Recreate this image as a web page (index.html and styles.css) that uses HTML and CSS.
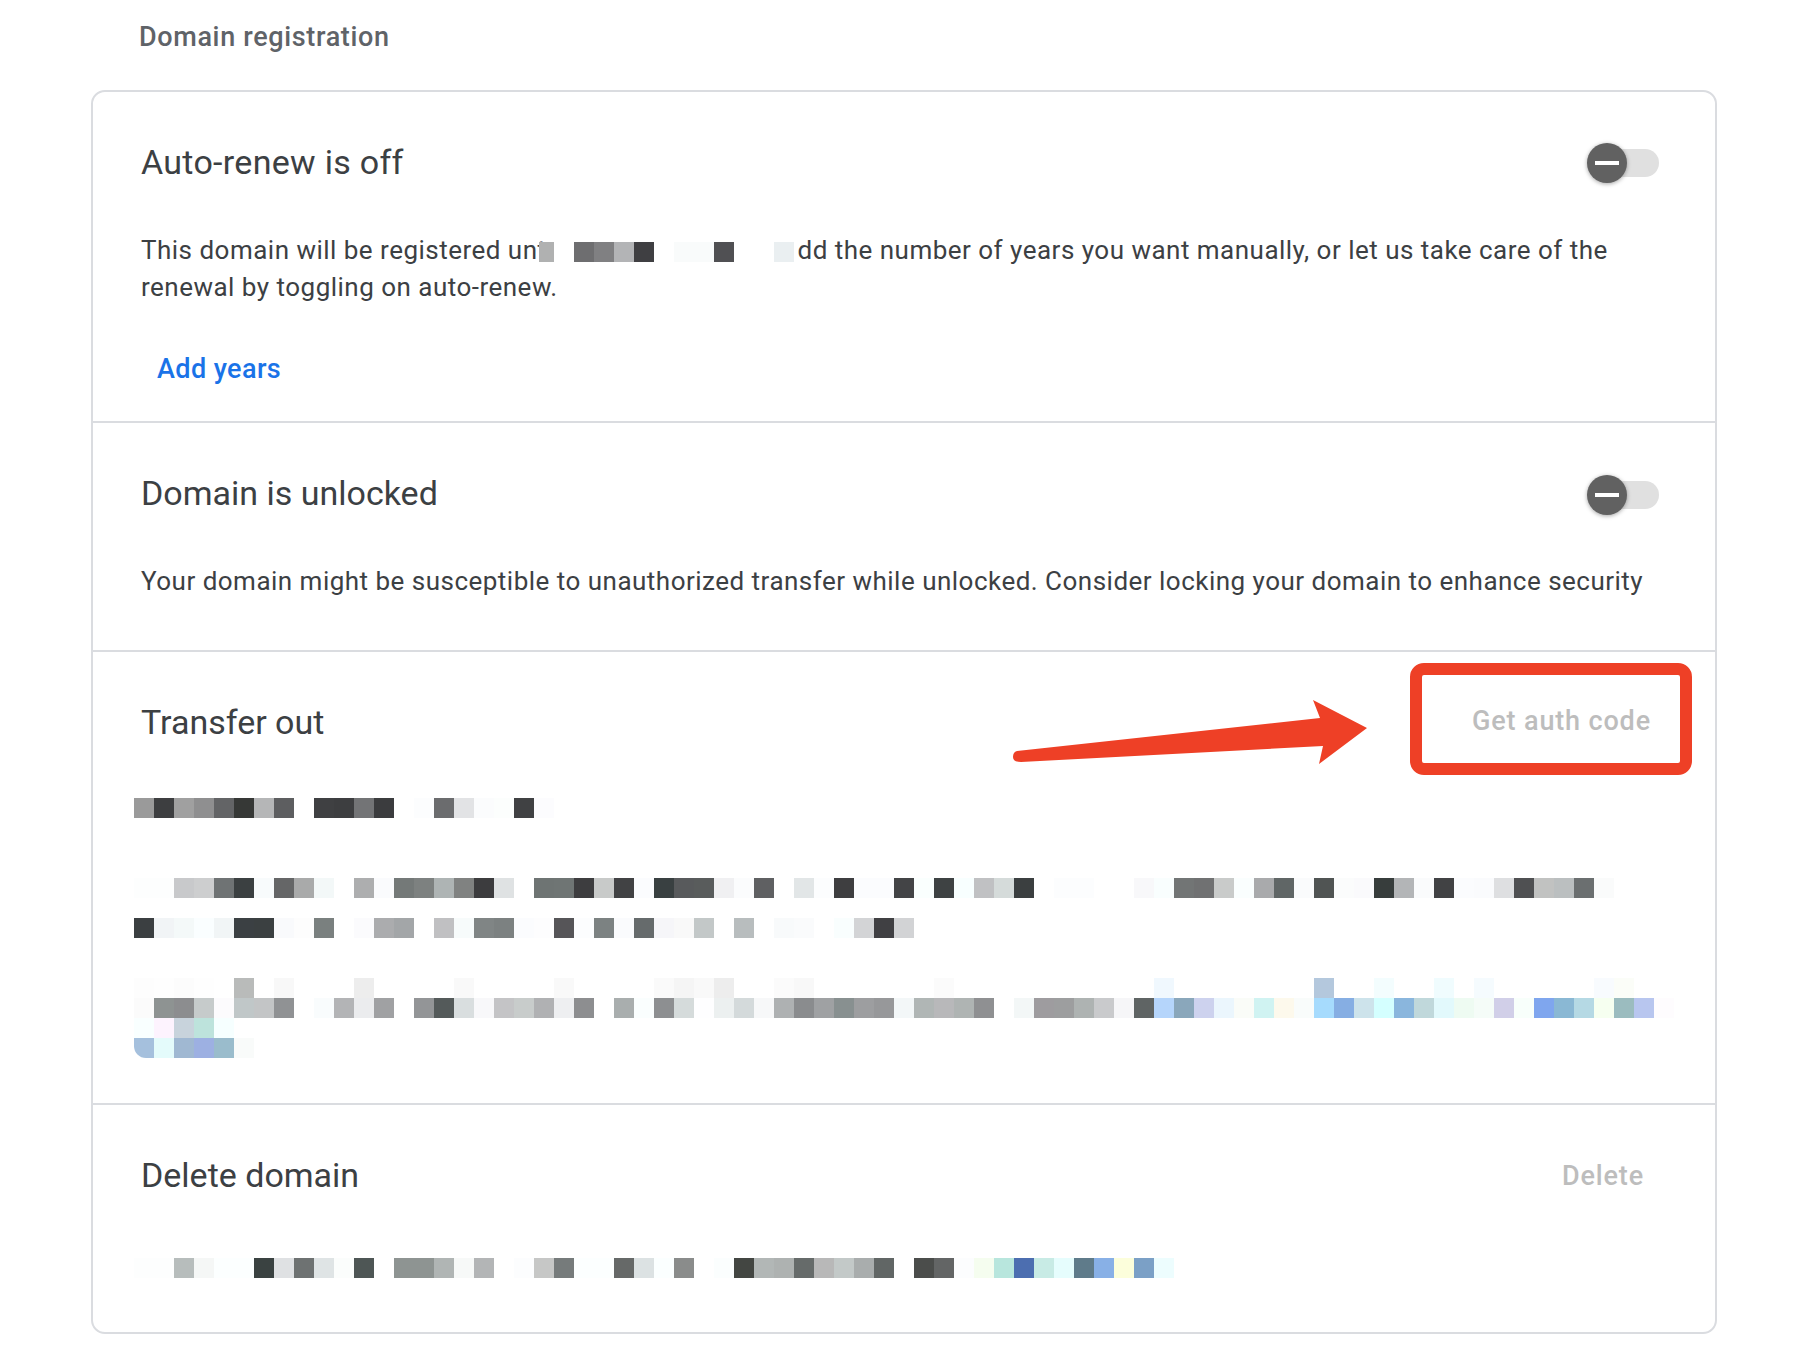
FILE: index.html
```html
<!DOCTYPE html>
<html lang="en">
<head>
<meta charset="utf-8">
<title>Domain registration</title>
<link rel="stylesheet" href="styles.css">
</head>
<body>
<main class="page">
  <h1 class="page-title">Domain registration</h1>
  <div class="card">
    <section class="panel panel-renew">
      <div class="panel-head">
        <h2>Auto-renew is off</h2>
        <span class="toggle"><span class="knob"><span class="minus"></span></span></span>
      </div>
      <p class="body-text">This domain will be registered unt<span class="mosaic-row inline-redaction" data-cells="b0b1b1 fff 6e6e70 808082 b3b4b6 3f3f42 fff f9fbfb f9fbfb 505053 fff fff eaeff1"></span>dd the number of years you want manually, or let us take care of the renewal by toggling on auto-renew.</p>
      <a class="link" href="#">Add years</a>
    </section>
    <section class="panel panel-lock">
      <div class="panel-head">
        <h2>Domain is unlocked</h2>
        <span class="toggle"><span class="knob"><span class="minus"></span></span></span>
      </div>
      <p class="body-text">Your domain might be susceptible to unauthorized transfer while unlocked. Consider locking your domain to enhance security</p>
    </section>
    <section class="panel panel-transfer">
      <div class="panel-head">
        <h2>Transfer out</h2>
        <button class="flat-btn btn-auth" type="button">Get auth code</button>
      </div>
      <div class="mosaic">
        <div class="mosaic-row gap-60" data-cells="9a9a9a 3d3e40 a0a0a0 8f8f90 636466 363836 b5b6b7 5d5e60 fff 3f4042 3d3e40 737476 3b3c3e fff fcfdfe 6b6c6e e2e3e5 fbfcfd fcfefd 404143 fcfcfe"></div>
        <div class="mosaic-row gap-20" data-cells="fdfefe fdfefe c8c9cb cdcecf 6f7374 3b4041 f8fbfc 656667 a9aaaa f3f8f8 fff adaeaf fafbfd 747978 7d8180 aeb4b4 808281 3c3c3e dfe2e3 fff 6e7473 6f7574 3d3d3f c8cac9 414244 fbfcfe 394041 585a5c 595c5c f0f0f2 fbfcfd 5f6062 fff e2e6e7 fcfdfe 3e3e40 fbfcfe fbfcfe 434446 fafffe 3e4243 f8ffff c0c1c3 d5dbda 3b3f40 fff fcfdfe fcfdfe fff fff f8f8fa f9fefe 727575 707172 c9cbca fafefe a9aaac 606666 fafbfc 505453 fbfcfc fafafc 373d3c b3b5b7 fafbfc 414244 fbfcfe fafbfd dedfe1 4f5052 c1c2c1 bbbfc0 6b6f70 fafbfb"></div>
        <div class="mosaic-row gap-40" data-cells="3b3f41 f1f4f6 f4f9f9 fafeff f1f5f6 3b4043 3b4041 f9fafc fdfdfd 7a807f fff fbfbfd abacae a3a6a8 fff c0c0c2 f7fbfb 808585 7c8181 fbfcfe fdfdfe 565558 fcfdfe 7c8282 fafbfd 666b6c f6f6f9 f9f9f9 c3c8c8 fff b8bdbe fff f8fafb fafbfc fff f9fefe d3d4d6 404043 d2d3d5"></div>
        <div class="mosaic-row" data-cells="fdfdfd fefefe fcfcfc fefefe fff b9bbba fff f8f8f8 fff fff fff ededed fff fff fff fff f9f9f9 fff fff fff fff f9f9f9 fff fff fff fff fafafa f5f5f5 f9f9f9 ededed fff fff fbfbfb f8f8f8 fff fff fff fff fff fff fbfbfb fff fff fff fff fff fff fff fff fff fff f0f8fe fff fff fff fff fff fff fff b4c8dd fff fff f3fdfe fff fff f0fcfe fff f5fbfe fff fff fff fff fff f8fbfe fbfdf8"></div>
        <div class="mosaic-row" data-cells="fbfbfb 8e9392 8c8d8f c6cbcb fcfbfd c0c7c8 c3c5c6 909294 fff f9fcfd b3b4b6 ebecee a0a1a3 fff 939597 545a5a d9dedf f8f8fa c4c4c6 c8cccb b0b1b3 eeeff1 8d8e90 fff a9aeae fafefe 8d8f91 d5dbdb fefeff ecf0f0 d4dadb f7f8f9 aeb1b2 8a8c8e 9fa1a3 889090 9d9ea0 97989a f3f7f8 b0b6b5 b8b8ba afb4b3 8f9092 fff f3f7f7 9e9c9f 9d9e9f aeb3b2 c9cacc f6f6f8 5f6464 b5d5fb 8aa7bb cdd2ee ebf6fd fafcf8 d0f3f2 fdf9ec f9fcfb a6dbfd 86aee3 cde3eb d4ffff 8ab6dd c0d8db e2f9fc eefbf2 f5fcf8 d1cfe8 f8fffb 7fa6ee 8ab8d4 b5d9e4 f6fff0 9bbcbf b8c6ef fefcfe"></div>
        <div class="mosaic-row" data-cells="f9ffff fdf3fe c8d3dc bde3dc f6ffff"></div>
        <div class="mosaic-row rounded-start" data-cells="a5c0dd e4fbfb a0b8d2 9db0e2 9abccc f9fbfa"></div>
      </div>
    </section>
    <section class="panel panel-delete">
      <div class="panel-head">
        <h2>Delete domain</h2>
        <button class="flat-btn btn-delete" type="button">Delete</button>
      </div>
      <div class="mosaic">
        <div class="mosaic-row" data-cells="fdfefe fdfefe b7bdbc f5f7f6 fcffff fcffff 3a4241 dfe1e3 6e7272 dfe4e5 fbfdfc 4e5655 fff 8e9492 8e9492 b0b5b4 f7f9f8 b3b5b6 fff fcfdfe c6c7c6 767b7b fcffff fcffff 666968 dce2e3 fbffff 8a8c8b fff fbfefe 434642 b2b7b6 aeb2b1 666b6a b8b8b8 c3c9c8 a9adad 616665 fff 4b4d4b 636565 fcfdfe f5fdef b8e6dd 4c6eb0 c8ebe5 e6fdfd 5f7b8a 88b0e6 fcfedb 7ba0c6 edfdfe"></div>
      </div>
    </section>
  </div>
  <svg class="annotation" viewBox="0 0 1816 1356" aria-hidden="true">
    <rect class="callout" x="1416" y="669" width="270" height="100" rx="8"/>
    <path class="arrow" d="M1017 751 L1320 718 L1313 700 L1367 728 L1319 764 L1323 746 L1021 762 Q1013 762 1013 757 Q1013 752 1017 751 Z"/>
  </svg>
</main>
<script src="script.js"></script>
</body>
</html>
```
FILE: styles.css
```css
* { box-sizing: border-box; }
html, body { margin: 0; background: #fff; }
body { font-family: Roboto, "Liberation Sans", sans-serif; }

.page { position: relative; width: 1816px; height: 1356px; overflow: hidden; padding-left: 91px; }

.page-title {
  margin: 0;
  height: 90px;
  padding: 19px 0 0 48px;
  font-size: 27px;
  line-height: 36px;
  font-weight: 500;
  letter-spacing: .65px;
  color: #5f6368;
}

.card {
  width: 1626px;
  height: 1244px;
  border: 2px solid #dadce0;
  border-radius: 14px;
}

.panel { padding: 48px 56px 0 48px; border-bottom: 2px solid #dadce0; }
.panel:last-child { border-bottom: 0; }
.panel-renew { height: 331px; }
.panel-lock { height: 229px; }
.panel-transfer { height: 453px; }

.panel-head { display: flex; justify-content: space-between; align-items: center; height: 44px; }
.panel-head h2 {
  margin: 0;
  font-size: 34px;
  line-height: 44px;
  font-weight: 400;
  color: #3c4043;
}
.panel-renew h2 { letter-spacing: .3px; }

.body-text {
  margin: 48px 0 0;
  font-size: 26px;
  line-height: 37px;
  letter-spacing: .485px;
  color: #3c4043;
}

.link {
  display: block;
  width: max-content;
  margin: 45px 0 0 16px;
  font-size: 27px;
  line-height: 36px;
  letter-spacing: .4px;
  color: #1a73e8;
  font-weight: 500;
  text-decoration: none;
}

.toggle { position: relative; display: block; width: 72px; height: 40px; top: 1px; }
.panel-lock .toggle { top: 2px; }
.toggle::before {
  content: "";
  position: absolute;
  left: 4px; right: 0; top: 6px;
  height: 28px;
  border-radius: 14px;
  background: #e0e0e0;
}
.knob {
  position: absolute;
  left: 0; top: 0;
  width: 40px; height: 40px;
  display: flex; align-items: center; justify-content: center;
  border-radius: 50%;
  background: #616161;
  box-shadow: 0 1px 4px rgba(0,0,0,.35);
}
.minus { width: 24px; height: 3.4px; background: #fff; }

.flat-btn {
  border: 0;
  padding: 0;
  background: none;
  font: 500 27px/36px Roboto, "Liberation Sans", sans-serif;
  letter-spacing: .85px;
  color: #bdbdbd;
}
.btn-auth { margin: -3px 8px 0 0; }
.btn-delete { margin: 1px 15px 0 0; }

.mosaic { margin-left: -7px; }
.panel-transfer .mosaic { margin-top: 54px; }
.panel-delete .mosaic { margin-top: 61px; }
.mosaic-row { display: flex; height: 20px; }
.mosaic-row i { flex: 0 0 20px; height: 20px; }
.gap-60 { margin-bottom: 60px; }
.gap-40 { margin-bottom: 40px; }
.gap-20 { margin-bottom: 20px; }
.rounded-start i:first-child { border-bottom-left-radius: 12px; }

.inline-redaction { display: inline-flex; vertical-align: -3px; margin: 0 4px 0 -8px; background: #fff; }
.inline-redaction i:first-child { flex-basis: 15px; }

.annotation { position: absolute; left: 0; top: 0; width: 1816px; height: 1356px; pointer-events: none; }
.callout { fill: none; stroke: #ee4026; stroke-width: 12; }
.arrow { fill: #ee4026; }
```
FILE: script.js
```js
document.querySelectorAll('.mosaic-row').forEach(function (row) {
  row.dataset.cells.split(' ').forEach(function (hex) {
    var cell = document.createElement('i');
    cell.style.background = '#' + hex;
    row.appendChild(cell);
  });
});
```
